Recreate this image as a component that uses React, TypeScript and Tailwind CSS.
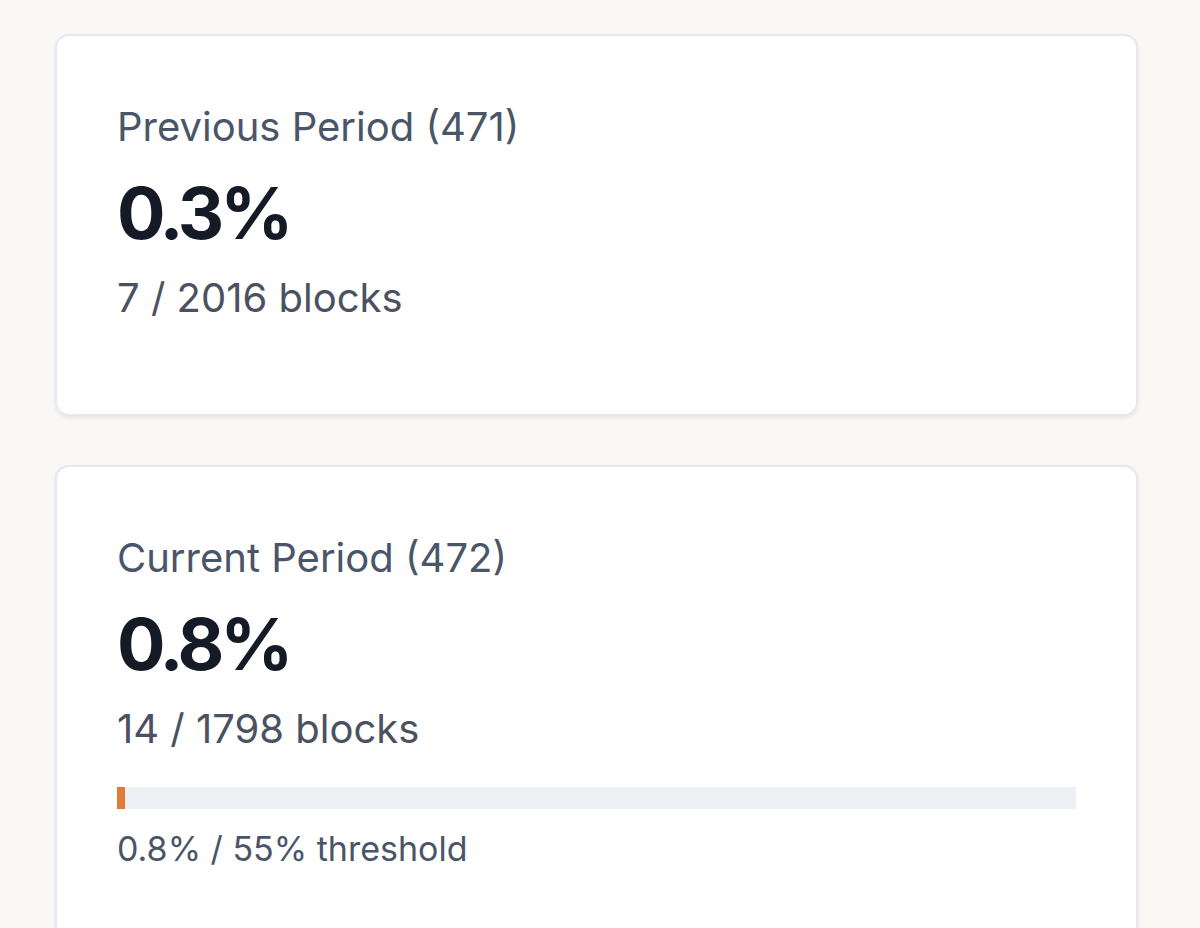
import React from 'react';

type Period = {
  label: string;
  pct: string;
  blocks: string;
  threshold?: { value: number; max: number };
};

const periods: Period[] = [
  { label: 'Previous Period (471)', pct: '0.3%', blocks: '7 / 2016 blocks' },
  {
    label: 'Current Period (472)',
    pct: '0.8%',
    blocks: '14 / 1798 blocks',
    threshold: { value: 0.8, max: 55 },
  },
];

function PeriodCard({ period }: { period: Period }) {
  return (
    <div className="rounded-[14px] border-2 border-[#e4e8ef] bg-white px-[60px] pt-[68px] pb-[93px] shadow-[0_2px_4px_rgba(15,23,42,0.08)]">
      <div className="text-[40px] leading-[46px] text-[#4a5568]">{period.label}</div>
      <div className="mt-[23px] text-[72px] leading-[80px] font-bold text-[#141a26] tracking-[-4px]">
        {period.pct}
      </div>
      <div className="mt-[22px] text-[40px] leading-[46px] text-[#4b5160]">{period.blocks}</div>
      {period.threshold && (
        <div className="mt-[35px]">
          <div className="h-[22px] w-full bg-[#edf1f5]">
            <div
              className="h-full bg-[#e07b39]"
              style={{ width: `${period.threshold.value}%` }}
            />
          </div>
          <div className="mt-[20px] text-[34px] leading-[40px] text-[#4a5568]">
            {period.threshold.value}% / {period.threshold.max}% threshold
          </div>
        </div>
      )}
    </div>
  );
}

export default function App() {
  return (
    <div
      className="min-h-screen bg-[#f9f8f5] pl-[55px] pr-[62px] pt-[34px] flex flex-col gap-[49px]"
      style={{ fontFamily: 'Inter, "Noto Sans", sans-serif' }}
    >
      {periods.map((p) => (
        <PeriodCard key={p.label} period={p} />
      ))}
    </div>
  );
}
